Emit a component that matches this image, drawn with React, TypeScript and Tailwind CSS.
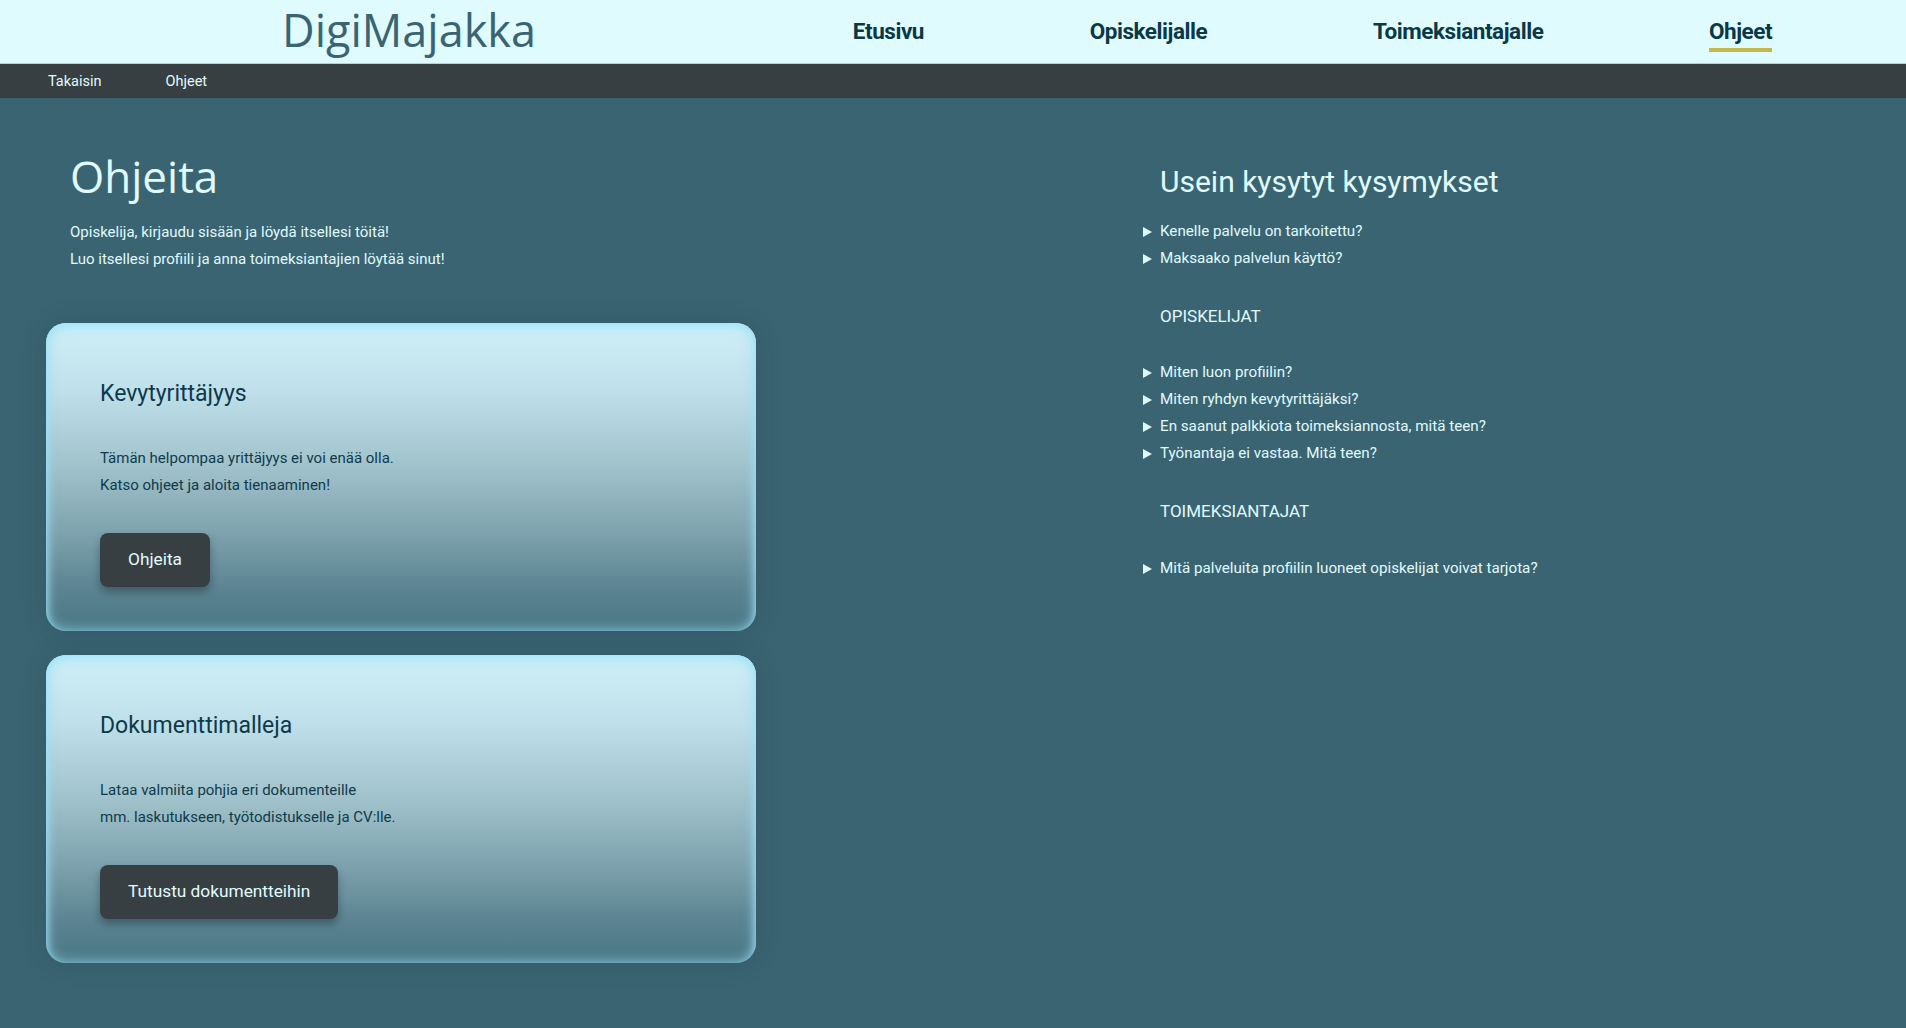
import React from "react";

function Tri() {
  return (
    <svg width="9" height="10" viewBox="0 0 9 10" className="shrink-0">
      <path d="M0 0 L9 5 L0 10 Z" fill="#e0fbfe" />
    </svg>
  );
}

function Item({ children }: { children: React.ReactNode }) {
  return (
    <div className="flex items-center h-[27px] -ml-[17px]">
      <Tri />
      <span className="ml-[8px] text-[15.2px] text-[#e0fbfe]">{children}</span>
    </div>
  );
}

function Card({
  title,
  lines,
  button,
}: {
  title: string;
  lines: string[];
  button: string;
}) {
  return (
    <div className="rounded-[20px] h-[308px] pl-[54px] pt-[56px] bg-[linear-gradient(180deg,#d0eff8_0%,#bfe0ea_22%,#a2c4cd_45%,#7ea3ae_68%,#5d8593_85%,#4a7684_100%)] shadow-[inset_0_0_14px_rgba(140,215,240,0.85),inset_0_5px_8px_rgba(185,240,255,0.9),0_0_24px_rgba(20,45,55,0.18)]">
      <h2 className="text-[23px] leading-[30px] text-[#0c3a4a]">{title}</h2>
      <div className="mt-[36px] text-[15px] leading-[27px] text-[#0f3b4b]">
        {lines.map((l) => (
          <p key={l}>{l}</p>
        ))}
      </div>
      <button className="mt-[34px] h-[54px] px-[28px] rounded-[8px] bg-[#383f43] text-[#e0fbfe] text-[17.3px] shadow-[0_5px_8px_rgba(0,0,0,0.3)]">
        {button}
      </button>
    </div>
  );
}

export default function App() {
  return (
    <div className="min-h-screen flex flex-col bg-[#3a6472] font-[Roboto,sans-serif]">
      <header className="h-[64px] shrink-0 flex items-start bg-[#e0fbfe] border-b border-[#c6cacb]">
        <div className="w-[770px] pl-[48px] pt-[5px] flex justify-center">
          <span className="font-['Open_Sans',sans-serif] text-[45px] leading-[50px] text-[#3a6472]">
            DigiMajakka
          </span>
        </div>
        <nav className="w-[1085px] flex justify-around pt-[19px]">
          {["Etusivu", "Opiskelijalle", "Toimeksiantajalle", "Ohjeet"].map((n) => (
            <div key={n} className="flex flex-col">
              <span className="text-[22.5px] leading-[24px] font-bold tracking-[-0.02em] text-[#0b3847]">
                {n}
              </span>
              {n === "Ohjeet" && <div className="mt-[5px] h-[4px] bg-[#c4b84a]" />}
            </div>
          ))}
        </nav>
      </header>
      <div className="h-[34px] shrink-0 bg-[#383f43] flex items-center pt-[2px] pl-[48px] gap-[64px] text-[14.5px] text-[#e0fbfe]">
        <span>Takaisin</span>
        <span>Ohjeet</span>
      </div>
      <main className="flex flex-1">
        <section className="w-[756px] pl-[46px] shrink-0">
          <div className="pl-[24px] pt-[53px]">
            <h1 className="font-['Open_Sans',sans-serif] text-[44px] leading-[50px] text-[#e0fbfe]">
              Ohjeita
            </h1>
            <div className="mt-[18px] text-[15px] leading-[27px] text-[#e0fbfe]">
              <p>Opiskelija, kirjaudu sisään ja löydä itsellesi töitä!</p>
              <p>Luo itsellesi profiili ja anna toimeksiantajien löytää sinut!</p>
            </div>
          </div>
          <div className="mt-[50px] flex flex-col gap-[24px] pb-[60px]">
            <Card
              title="Kevytyrittäjyys"
              lines={[
                "Tämän helpompaa yrittäjyys ei voi enää olla.",
                "Katso ohjeet ja aloita tienaaminen!",
              ]}
              button="Ohjeita"
            />
            <Card
              title="Dokumenttimalleja"
              lines={[
                "Lataa valmiita pohjia eri dokumenteille",
                "mm. laskutukseen, työtodistukselle ja CV:lle.",
              ]}
              button="Tutustu dokumentteihin"
            />
          </div>
        </section>
        <section className="pl-[404px] pt-[66px] text-[#e0fbfe]">
          <h2 className="text-[30px] leading-[36px]">Usein kysytyt kysymykset</h2>
          <div className="mt-[18px]">
            <Item>Kenelle palvelu on tarkoitettu?</Item>
            <Item>Maksaako palvelun käyttö?</Item>
          </div>
          <h3 className="mt-[32px] text-[17px] leading-[24px]">OPISKELIJAT</h3>
          <div className="mt-[31px]">
            <Item>Miten luon profiilin?</Item>
            <Item>Miten ryhdyn kevytyrittäjäksi?</Item>
            <Item>En saanut palkkiota toimeksiannosta, mitä teen?</Item>
            <Item>Työnantaja ei vastaa. Mitä teen?</Item>
          </div>
          <h3 className="mt-[32px] text-[17px] leading-[24px]">TOIMEKSIANTAJAT</h3>
          <div className="mt-[32px]">
            <Item>Mitä palveluita profiilin luoneet opiskelijat voivat tarjota?</Item>
          </div>
        </section>
      </main>
    </div>
  );
}
